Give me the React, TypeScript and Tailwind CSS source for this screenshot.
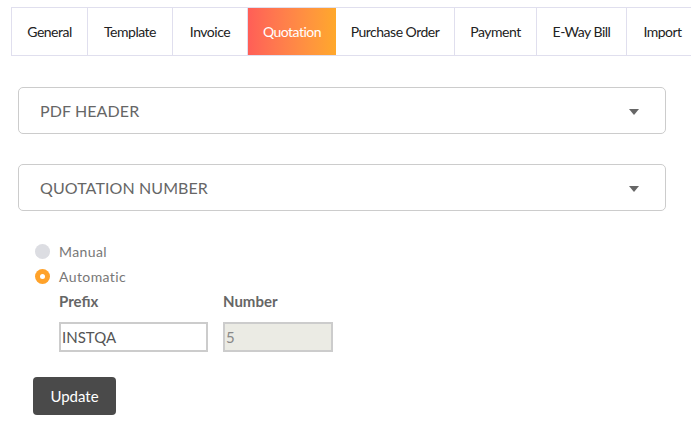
import React from "react";

const tabs = [
  { label: "General", w: "w-[77px]" },
  { label: "Template", w: "w-[85px]" },
  { label: "Invoice", w: "w-[75px]" },
  { label: "Quotation", w: "w-[88px]", active: true },
  { label: "Purchase Order", w: "w-[119px]" },
  { label: "Payment", w: "w-[82px]" },
  { label: "E-Way Bill", w: "w-[90px]" },
  { label: "Import", w: "w-[72px]" },
];

function Caret() {
  return (
    <svg width="10" height="6" viewBox="0 0 10 6" className="mr-[26px] mt-[2px]">
      <path d="M0 0 L10 0 L5 6 Z" fill="#666666" />
    </svg>
  );
}

function Section({ title }: { title: string }) {
  return (
    <div className="ml-[18px] w-[648px] h-[47px] border border-[#cccccc] rounded-[5px] flex items-center justify-between">
      <span className="ml-[21px] text-[16px] text-[#666666] tracking-[0.1px]">{title}</span>
      <Caret />
    </div>
  );
}

export default function App() {
  return (
    <div
      className="w-[691px] h-[422px] bg-white overflow-hidden relative"
      style={{ fontFamily: "Lato, 'Open Sans', sans-serif" }}
    >
      <div className="pt-[7px] pl-[11px]">
        <div className="flex h-[49px] border-y border-[#e0dfee] w-[800px]">
          {tabs.map((t, i) => (
            <div
              key={t.label}
              className={
                "shrink-0 flex items-center justify-center text-[14px] tracking-[-0.5px] " +
                t.w +
                " " +
                (i === 0 ? "border-l border-r border-[#e0dfee] " : "border-r border-[#e0dfee] ") +
                (t.active
                  ? "bg-gradient-to-r from-[#ff5e57] to-[#ffa82a] text-white border-r-0"
                  : "text-[#222222]")
              }
            >
              {t.label}
            </div>
          ))}
        </div>
      </div>

      <div className="mt-[31px]">
        <Section title="PDF HEADER" />
      </div>
      <div className="mt-[30px]">
        <Section title="QUOTATION NUMBER" />
      </div>

      <div className="ml-[35px] mt-[32px] flex flex-col gap-[9px]">
        <div className="flex items-center gap-[9px] h-[16px]">
          <span className="w-[15px] h-[15px] rounded-full bg-[#dcdde2]" />
          <span className="text-[14px] text-[#777777] tracking-[0.4px]">Manual</span>
        </div>
        <div className="flex items-center gap-[9px] h-[16px]">
          <span className="w-[15px] h-[15px] rounded-full bg-[#ffa22a] flex items-center justify-center">
            <span className="w-[5px] h-[5px] rounded-full bg-white" />
          </span>
          <span className="text-[14px] text-[#777777] tracking-[0.4px]">Automatic</span>
        </div>
      </div>

      <div className="ml-[59px] mt-[8px] flex gap-[15px]">
        <div className="flex flex-col w-[149px]">
          <span className="text-[15px] font-bold text-[#666666] h-[18px] leading-[18px]">Prefix</span>
          <div className="mt-[12px] h-[30px] border-2 border-[#cccccc] bg-white flex items-center px-[1px] text-[15px] text-[#555555]">
            INSTQA
          </div>
        </div>
        <div className="flex flex-col w-[110px]">
          <span className="text-[15px] font-bold text-[#666666] h-[18px] leading-[18px]">Number</span>
          <div className="mt-[12px] h-[30px] border-2 border-[#cccccc] bg-[#ebebe4] flex items-center px-[1px] text-[15px] text-[#888888]">
            5
          </div>
        </div>
      </div>

      <button className="ml-[33px] mt-[25px] w-[83px] h-[38px] bg-[#4a4a4a] rounded-[4px] text-white text-[15px] flex items-center justify-center">
        Update
      </button>
    </div>
  );
}
